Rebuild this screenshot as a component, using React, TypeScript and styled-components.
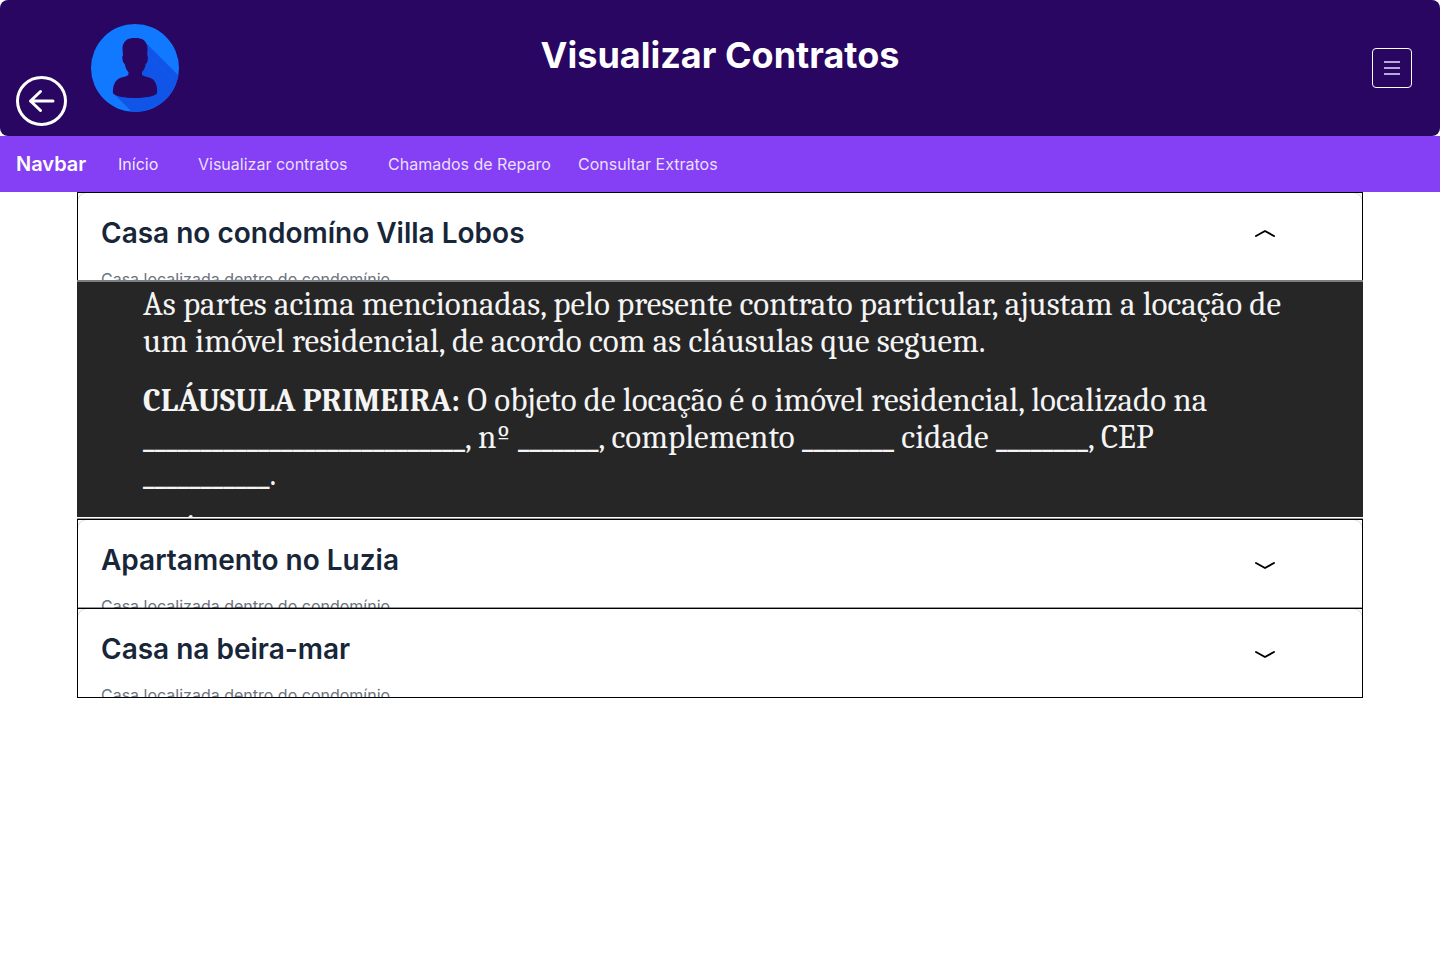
import React, { useState } from "react";
import styled, { createGlobalStyle } from "styled-components";

const GlobalStyle = createGlobalStyle`
  *, *::before, *::after { box-sizing: border-box; }
  body {
    margin: 0;
    background: #fff;
    font-family: Inter, "Liberation Sans", sans-serif;
  }
`;

const Header = styled.header`
  display: grid;
  grid-template-columns: 1fr auto 1fr;
  height: 136px;
  padding: 0 16px;
  border-radius: 8px;
  background: #290661;
  color: #fff;
`;

const HeaderStart = styled.div`
  display: flex;
  align-items: center;
  gap: 24px;
`;

const BackButton = styled.button`
  align-self: flex-end;
  width: 51px;
  height: 50px;
  margin: 0 0 10px;
  padding: 0;
  border: 0;
  background: none;
  color: #fff;
  cursor: pointer;

  svg { display: block; }
`;

const Avatar = styled.svg`
  display: block;
  width: 88px;
  height: 88px;
`;

const PageTitle = styled.h1`
  margin: 0;
  padding-top: 32px;
  font-size: 36px;
  line-height: 46px;
  font-weight: 700;
  text-align: center;
`;

const MenuButton = styled.button`
  display: flex;
  align-items: center;
  justify-content: center;
  align-self: center;
  justify-self: end;
  width: 40px;
  height: 40px;
  margin-right: 12px;
  padding: 0;
  border: 1px solid #fff;
  border-radius: 4px;
  background: none;
  color: #b9a9d9;
  cursor: pointer;
`;

const Nav = styled.nav`
  display: flex;
  align-items: center;
  height: 56px;
  padding: 0 16px;
  background: #8540f5;
`;

const Brand = styled.a`
  width: 102px;
  color: #fff;
  font-size: 20px;
  line-height: 30px;
  font-weight: 600;
  text-decoration: none;
`;

const NavLink = styled.a<{ $wide?: boolean; $active?: boolean }>`
  width: ${(p) => (p.$wide ? 190 : 80)}px;
  color: ${(p) => (p.$active ? "rgba(255, 255, 255, 0.9)" : "rgba(255, 255, 255, 0.85)")};
  font-size: 16px;
  line-height: 24px;
  white-space: nowrap;
  text-decoration: none;
`;

const List = styled.main`
  margin: 0 77px;
`;

const CardHead = styled.div`
  position: relative;
  display: flex;
  justify-content: space-between;
  height: 90px;
  padding: 0 87px 0 23px;
  overflow: hidden;
  border: 1px solid #000;
  background: #fff;

  &::before {
    content: "";
    position: absolute;
    inset: -1px;
    border: 1px solid rgba(0, 0, 0, 0.15);
    border-radius: 10px 10px 0 0;
    pointer-events: none;
  }
`;

const Entry = styled.section`
  & + & { margin-top: -1px; }
  & + & > ${CardHead} { box-shadow: 0 -1px 0 rgba(0, 0, 0, 0.4); }
`;

const CardTitle = styled.h2`
  margin: 0;
  padding-top: 22px;
  color: #172638;
  font-size: 28px;
  line-height: 36px;
  font-weight: 600;
`;

const CardText = styled.p`
  margin: 16px 0 0;
  color: #6b7480;
  font-size: 16px;
  line-height: 24px;
`;

const Toggle = styled.button`
  align-self: center;
  width: 20px;
  height: 20px;
  padding: 0;
  border: 0;
  background: none;
  color: #000;
  cursor: pointer;

  svg { display: block; }
`;

const Contract = styled.div`
  position: relative;
  height: 237px;
  margin: -2px 0 3px;
  padding: 4px 66px 0;
  overflow: hidden;
  border-top: 2px solid #7c7f82;
  background: #262626;
  color: #f4f4f4;
  font-family: Cambria, Caladea, "Liberation Serif", serif;
  font-size: 33px;
  line-height: 37px;

  strong { font-size: 32px; line-height: 1; }
`;

const Clause = styled.p`
  margin: 0 0 22px;
`;

const Line = styled.span`
  display: block;
  white-space: nowrap;
`;

const Blank = styled.span`
  font-size: 31px;
  line-height: 1;
  font-weight: 700;
`;

const items = [
  { title: "Casa no condomíno Villa Lobos", open: true },
  { title: "Apartamento no Luzia", open: false },
  { title: "Casa na beira-mar", open: false },
];

function ContractText() {
  return (
    <Contract>
      <Clause>
        <Line>As partes acima mencionadas, pelo presente contrato particular, ajustam a locação de</Line>
        <Line>um imóvel residencial, de acordo com as cláusulas que seguem.</Line>
      </Clause>
      <Clause>
        <Line><strong>CLÁUSULA PRIMEIRA:</strong> O objeto de locação é o imóvel residencial, localizado na</Line>
        <Line>
          <Blank>{"_".repeat(28)}</Blank>, nº <Blank>{"_".repeat(7)}</Blank>, complemento{" "}
          <Blank>{"_".repeat(8)}</Blank> cidade <Blank>{"_".repeat(8)}</Blank>, CEP
        </Line>
        <Line><Blank>{"_".repeat(11)}</Blank>.</Line>
      </Clause>
      <Clause>
        <strong>CLÁUSULA</strong>
      </Clause>
    </Contract>
  );
}

export default function App() {
  const [open, setOpen] = useState(items.map((item) => item.open));
  const toggle = (index: number) =>
    setOpen((current) => current.map((value, i) => (i === index ? !value : value)));

  return (
    <>
      <GlobalStyle />
      <Header>
        <HeaderStart>
          <BackButton aria-label="Voltar">
            <svg width="51" height="50" viewBox="0 0 51 50" fill="none" stroke="currentColor" strokeWidth="3" strokeLinecap="round" strokeLinejoin="round">
              <ellipse cx="25.5" cy="25" rx="24" ry="23.5" />
              <path d="M37 25H14.5M24.5 15.5L14.5 25L24.5 34.5" />
            </svg>
          </BackButton>
          <Avatar viewBox="0 0 88 88" aria-hidden="true">
            <defs>
              <clipPath id="disc"><circle cx="44" cy="44" r="44" /></clipPath>
            </defs>
            <circle cx="44" cy="44" r="44" fill="#1079ff" />
            <path clipPath="url(#disc)" fill="#1154e8" d="M56 20L100 64V100H53L24 71Z" />
            <path fill="#290661" d="M37 15C40 13.500 48 13.500 51 15C54.500 17 56.500 20 56.500 25L56.200 31L57 33.500L56.300 38L54.500 40.500C54.200 43.500 53 46 51 48V51C54 53 58 53 61.500 55C65 58 66.500 62.500 66 69.500C60 75.500 28 75.500 22 69.500C21.500 62.500 23.500 58 27 55C30.500 53 34.500 53 37.500 51V48C35.500 46 34.300 43.500 34 40.500L32 38L31.200 33.500L32 31L31.500 25C31.500 20 33.500 17 37 15Z" />
          </Avatar>
        </HeaderStart>
        <PageTitle>Visualizar Contratos</PageTitle>
        <MenuButton aria-label="Menu">
          <svg width="18" height="16" viewBox="0 0 18 16" stroke="currentColor" strokeWidth="2">
            <path d="M1 2H17M1 8H17M1 14H17" />
          </svg>
        </MenuButton>
      </Header>
      <Nav>
        <Brand href="#">Navbar</Brand>
        <NavLink href="#inicio" $active>Início</NavLink>
        <NavLink href="#contratos" $wide>Visualizar contratos</NavLink>
        <NavLink href="#reparo" $wide>Chamados de Reparo</NavLink>
        <NavLink href="#extratos" $wide>Consultar Extratos</NavLink>
      </Nav>
      <List>
        {items.map((item, index) => (
          <Entry key={item.title}>
            <CardHead>
              <div>
                <CardTitle>{item.title}</CardTitle>
                <CardText>Casa localizada dentro do condomínio</CardText>
              </div>
              <Toggle
                aria-expanded={open[index]}
                aria-label={item.title}
                onClick={() => toggle(index)}
              >
                <svg width="20" height="20" viewBox="0 0 20 20" fill="none" stroke="currentColor" strokeWidth="2" strokeLinecap="round" strokeLinejoin="round">
                  <path d={open[index] ? "M1 9L10 4L19 9" : "M1 9L10 14L19 9"} />
                </svg>
              </Toggle>
            </CardHead>
            {open[index] && <ContractText />}
          </Entry>
        ))}
      </List>
    </>
  );
}
